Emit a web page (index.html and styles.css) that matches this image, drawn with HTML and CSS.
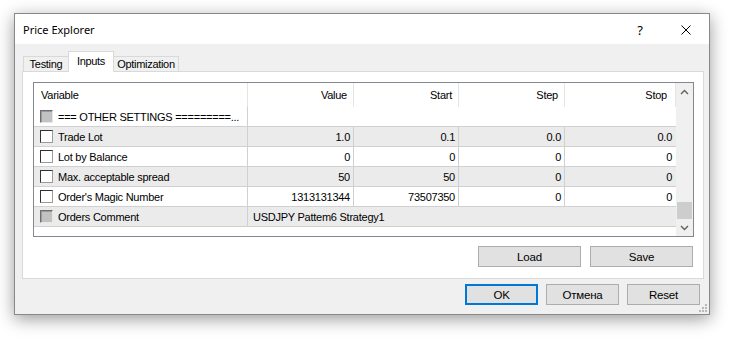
FILE: index.html
```html
<!DOCTYPE html>
<html>
<head>
<meta charset="utf-8">
<link rel="stylesheet" href="styles.css">
</head>
<body>
<div class="window">
  <div class="titlebar">
    <span class="title">Price Explorer</span>
    <span class="tbtn help">?</span>
    <span class="tbtn close"><svg width="10" height="10" viewBox="0 0 10 10"><path d="M0.5 0.5 L9.5 9.5 M9.5 0.5 L0.5 9.5" stroke="#000" stroke-width="1" fill="none"/></svg></span>
  </div>
  <div class="body">
    <div class="tabs">
      <div class="tab first">Testing</div>
      <div class="tab active">Inputs</div>
      <div class="tab last">Optimization</div>
    </div>
    <div class="panel">
      <div class="list">
        <div class="grid">
          <div class="hrow">
            <div class="hc var">Variable</div>
            <div class="hc num">Value</div>
            <div class="hc num">Start</div>
            <div class="hc num">Step</div>
            <div class="hc num last">Stop</div>
          </div>
          <div class="row white">
            <div class="c var"><span class="cb dis"></span>=== OTHER SETTINGS =========...</div>
            <div class="c span"></div>
          </div>
          <div class="row gray">
            <div class="c var"><span class="cb"></span>Trade Lot</div>
            <div class="c num">1.0</div>
            <div class="c num">0.1</div>
            <div class="c num">0.0</div>
            <div class="c num last">0.0</div>
          </div>
          <div class="row white">
            <div class="c var"><span class="cb"></span>Lot by Balance</div>
            <div class="c num">0</div>
            <div class="c num">0</div>
            <div class="c num">0</div>
            <div class="c num last">0</div>
          </div>
          <div class="row gray">
            <div class="c var"><span class="cb"></span>Max. acceptable spread</div>
            <div class="c num">50</div>
            <div class="c num">50</div>
            <div class="c num">0</div>
            <div class="c num last">0</div>
          </div>
          <div class="row white">
            <div class="c var"><span class="cb"></span>Order's Magic Number</div>
            <div class="c num">1313131344</div>
            <div class="c num">73507350</div>
            <div class="c num">0</div>
            <div class="c num last">0</div>
          </div>
          <div class="row gray">
            <div class="c var"><span class="cb dis"></span>Orders Comment</div>
            <div class="c span text">USDJPY Pattem6 Strategy1</div>
          </div>
        </div>
        <div class="scrollbar">
          <div class="sbtn"><svg width="9" height="6" viewBox="0 0 9 6"><path d="M1 5 L4.5 1.5 L8 5" stroke="#606060" stroke-width="1.4" fill="none"/></svg></div>
          <div class="track"></div>
          <div class="thumb"></div>
          <div class="sbtn"><svg width="9" height="6" viewBox="0 0 9 6"><path d="M1 1 L4.5 4.5 L8 1" stroke="#606060" stroke-width="1.4" fill="none"/></svg></div>
        </div>
      </div>
      <div class="panel-buttons">
        <div class="btn wide">Load</div>
        <div class="btn wide">Save</div>
      </div>
    </div>
    <div class="dialog-buttons">
      <div class="btn def">OK</div>
      <div class="btn">Отмена</div>
      <div class="btn">Reset</div>
    </div>
    <svg class="grip" width="8" height="8" viewBox="0 0 8 8">
      <rect x="6" y="0" width="2" height="2" fill="#b8b8b8"/>
      <rect x="3" y="3" width="2" height="2" fill="#b8b8b8"/>
      <rect x="6" y="3" width="2" height="2" fill="#b8b8b8"/>
      <rect x="0" y="6" width="2" height="2" fill="#b8b8b8"/>
      <rect x="3" y="6" width="2" height="2" fill="#b8b8b8"/>
      <rect x="6" y="6" width="2" height="2" fill="#b8b8b8"/>
    </svg>
  </div>
</div>
</body>
</html>
```
FILE: styles.css
```css
* { box-sizing: border-box; }
html, body { margin: 0; padding: 0; background: #fff; }
body {
  font-family: "Liberation Sans", Arial, sans-serif;
  font-size: 11px;
  letter-spacing: -0.25px;
  color: #000;
  padding: 13px 0 0 14px;
  min-height: 342px;
}
.window {
  width: 696px;
  height: 302px;
  border: 1px solid #888;
  background: #f0f0f0;
  box-shadow: 0 4px 16px rgba(0,0,0,0.4);
  display: flex;
  flex-direction: column;
}
.titlebar {
  height: 30px;
  background: #fff;
  display: flex;
  align-items: center;
  flex: none;
}
.title {
  flex: 1;
  padding-left: 8px;
  font-family: "Noto Sans", sans-serif;
  font-size: 11px;
  letter-spacing: 0;
  padding-top: 1px;
}
.tbtn {
  width: 46px;
  height: 30px;
  display: flex;
  align-items: center;
  justify-content: center;
}
.help { font-family: "Noto Sans", sans-serif; font-size: 13px; padding-top: 1px; }
.close svg { display: block; margin-top: 1px; }
.body {
  flex: 1;
  position: relative;
  padding: 7px 0 0 7px;
  display: flex;
  flex-direction: column;
}
.tabs {
  display: flex;
  align-items: flex-end;
  height: 20px;
  padding-left: 1px;
  font-size: 11px;
  letter-spacing: -0.3px;
}
.tab {
  flex: none;
  white-space: nowrap;
  height: 15px;
  border-top: 1px solid #d9d9d9;
  background: #f0f0f0;
  display: flex;
  align-items: center;
  justify-content: center;
  line-height: 1;
  padding-top: 1px;
}
.tab.first { width: 45px; border-left: 1px solid #d9d9d9; }
.tab.last { width: 65px; border-right: 1px solid #d9d9d9; }
.tab.active {
  width: 46px;
  height: 21px;
  margin-bottom: -1px;
  background: #fff;
  border: 1px solid #d9d9d9;
  border-bottom: none;
  position: relative;
  z-index: 1;
  align-items: flex-start;
  padding-top: 4px;
}
.panel {
  width: 682px;
  height: 208px;
  background: #fff;
  border: 1px solid #d9d9d9;
  padding: 10px 9px 0 10px;
  display: flex;
  flex-direction: column;
}
.list {
  width: 661px;
  height: 155px;
  border: 1px solid #828790;
  display: flex;
  background: #fff;
}
.grid { width: 642px; display: flex; flex-direction: column; }
.hrow { height: 24px; display: flex; }
.hc {
  display: flex;
  align-items: center;
  border-right: 1px solid #e5e5e5;
}
.hc.var { width: 214px; padding-left: 7px; }
.hc.num { justify-content: flex-end; padding-right: 6px; }
.hrow .hc:nth-child(2) { width: 106px; }
.hrow .hc:nth-child(3) { width: 105px; }
.hrow .hc:nth-child(4) { width: 106px; }
.hrow .hc:nth-child(5) { width: 111px; padding-right: 8px; }
.row {
  height: 20px;
  display: flex;
  border-bottom: 1px solid #d0d0d0;
}
.row.gray { background: #ebebeb; }
.row.white { background: #fff; }
.c {
  display: flex;
  align-items: center;
  border-right: 1px solid #d0d0d0;
  white-space: nowrap;
  overflow: hidden;
}
.c.var { width: 214px; padding-left: 6px; }
.c.num { justify-content: flex-end; padding-right: 3px; }
.row .c:nth-child(2) { width: 106px; }
.row .c:nth-child(3) { width: 105px; }
.row .c:nth-child(4) { width: 106px; }
.row .c:nth-child(5) { width: 111px; padding-right: 4px; }
.c.last { border-right: none; }
.row .c.span { flex: 1; width: auto; border-right: none; }
.c.text { padding-left: 5px; }
.cb {
  width: 13px;
  height: 13px;
  flex: none;
  margin-right: 5px;
  background: #fff;
  border: 1px solid #333;
  border-right-color: #9a9a9a;
  border-bottom-color: #9a9a9a;
}
.cb.dis {
  background: #c2c2c2;
  border-color: #6e6e6e #e8e8e8 #e8e8e8 #6e6e6e;
  box-shadow: inset 1px 1px 0 #9a9a9a;
}
.scrollbar {
  width: 17px;
  background: #f0f0f0;
  display: flex;
  flex-direction: column;
}
.sbtn {
  height: 17px;
  display: flex;
  align-items: center;
  justify-content: center;
  flex: none;
}
.track { flex: 1; }
.thumb {
  height: 17px;
  margin: 0 1px;
  background: #cdcdcd;
  flex: none;
}
.panel-buttons {
  display: flex;
  justify-content: flex-end;
  gap: 9px;
  margin-top: 9px;
  padding-right: 1px;
}
.btn {
  width: 73px;
  height: 21px;
  background: #e1e1e1;
  border: 1px solid #adadad;
  display: flex;
  align-items: center;
  justify-content: center;
  font-size: 11.5px;
  letter-spacing: -0.2px;
}
.btn.wide { width: 103px; }
.btn.def { border: 2px solid #0078d7; }
.dialog-buttons {
  display: flex;
  justify-content: flex-end;
  gap: 8px;
  margin-top: 5px;
  padding-right: 9px;
}
.grip {
  position: absolute;
  right: 2px;
  bottom: 2px;
}
```
